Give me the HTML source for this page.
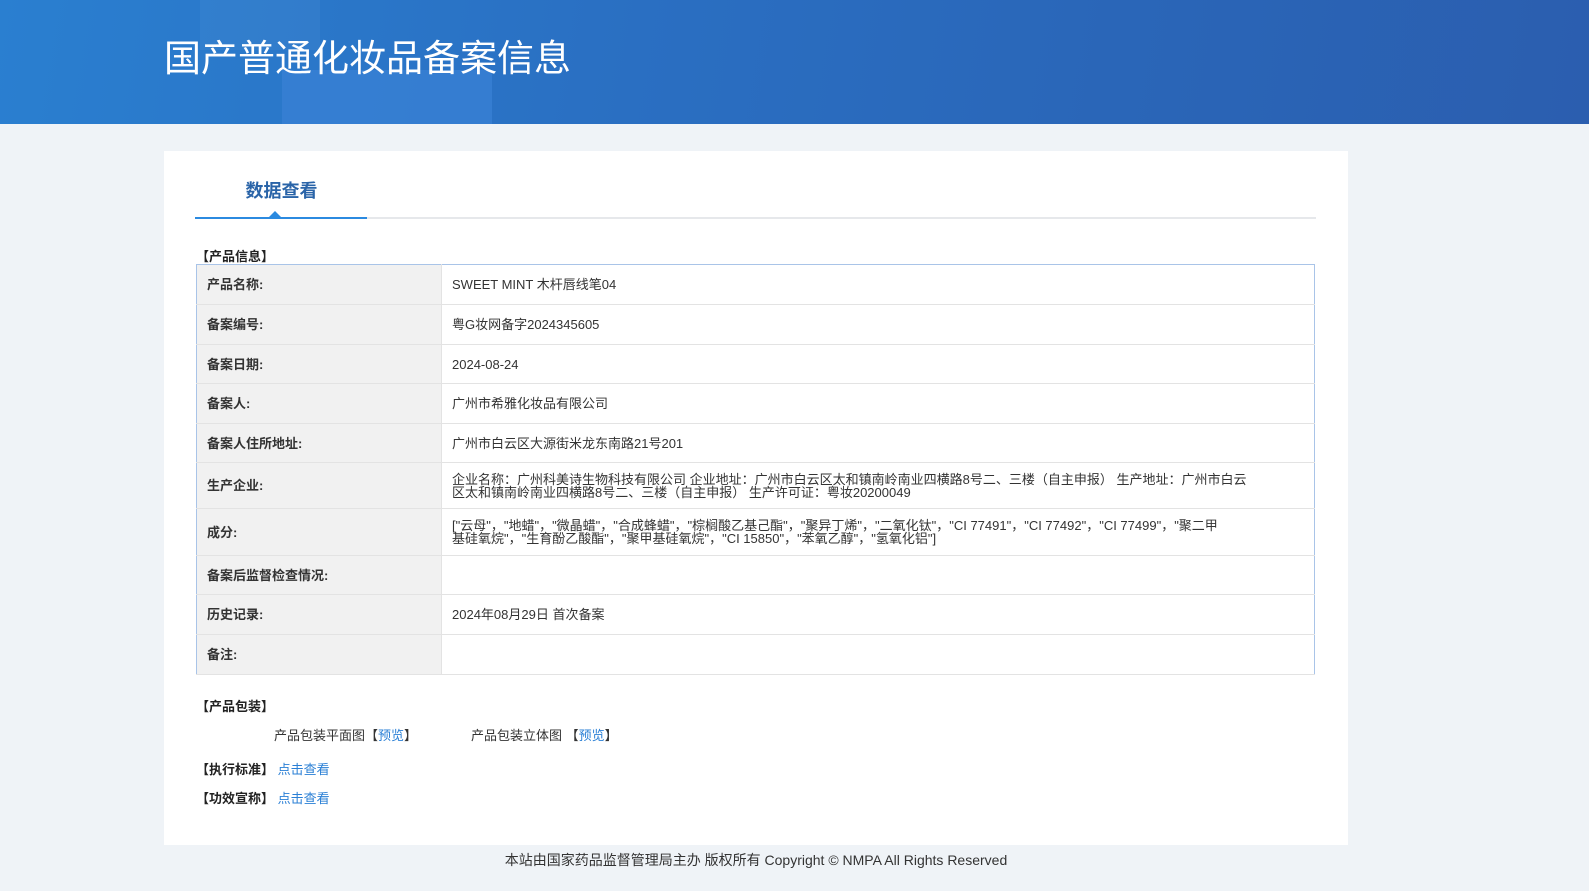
<!DOCTYPE html>
<html><head><meta charset="utf-8"><style>
*{margin:0;padding:0;box-sizing:border-box}
body{width:1589px;height:891px;background:#eff3f7;font-family:"Liberation Sans","Noto Sans CJK SC",sans-serif;font-size:13px;color:#333;position:relative;overflow:hidden}
.hd{position:absolute;left:0;top:0;width:1589px;height:124px;background:linear-gradient(100deg,#2a7fd0 0%,#2a6fc2 40%,#2a66b8 70%,#2b5eaf 100%);overflow:hidden}
.hd .s1{position:absolute;left:282px;top:70px;width:210px;height:60px;background:#3b82d6;opacity:.7}
.hd .s2{position:absolute;left:200px;top:-30px;width:120px;height:80px;background:rgba(255,255,255,.04)}
.hd h1{position:absolute;left:164px;top:28px;color:#fff;font-size:37px;font-weight:normal;letter-spacing:0}
.card{position:absolute;left:164px;top:151px;width:1184px;height:694px;background:#fff}
.tab{position:absolute;left:31px;top:26px;width:173px;text-align:center;font-size:18px;font-weight:bold;color:#2a64a8}
.line{position:absolute;left:31px;top:66px;width:1121px;height:2px;background:#e6e8eb}
.line b{position:absolute;left:0;top:0;width:172px;height:2px;background:#2b8ae0}
.tri{position:absolute;left:105px;top:60px;width:0;height:0;border-left:6px solid transparent;border-right:6px solid transparent;border-bottom:6px solid #2b8ae0}
.sec{position:absolute;left:32px;font-weight:bold;color:#222;font-size:13px}
table{position:absolute;left:32px;top:113px;width:1119px;border-collapse:collapse;border:1px solid #a9c4e8}
td{border-bottom:1px solid #e3e3e3;padding:0 10px;font-size:13px;line-height:13px}
td.l{width:245px;background:#f1f1f1;font-weight:bold;color:#333;border-right:1px solid #e3e3e3}
a{color:#2a7fd5;text-decoration:none}
.ft{position:absolute;top:850px;left:164px;width:1184px;text-align:center;font-size:14px;color:#333}
</style></head><body>
<div class="hd"><div class="s2"></div><div class="s1"></div><h1>国产普通化妆品备案信息</h1></div>
<div class="card">
<div class="tab">数据查看</div>
<div class="line"><b></b></div><div class="tri"></div>
<div class="sec" style="top:95px">【产品信息】</div>
<table>
<tr style="height:40px"><td class="l">产品名称:</td><td>SWEET MINT 木杆唇线笔04</td></tr>
<tr style="height:40px"><td class="l">备案编号:</td><td>粤G妆网备字2024345605</td></tr>
<tr style="height:39px"><td class="l">备案日期:</td><td>2024-08-24</td></tr>
<tr style="height:40px"><td class="l">备案人:</td><td>广州市希雅化妆品有限公司</td></tr>
<tr style="height:39px"><td class="l">备案人住所地址:</td><td>广州市白云区大源街米龙东南路21号201</td></tr>
<tr style="height:46px"><td class="l">生产企业:</td><td>企业名称：广州科美诗生物科技有限公司 企业地址：广州市白云区太和镇南岭南业四横路8号二、三楼（自主申报） 生产地址：广州市白云<br>区太和镇南岭南业四横路8号二、三楼（自主申报） 生产许可证：粤妆20200049</td></tr>
<tr style="height:47px"><td class="l">成分:</td><td>["云母"，"地蜡"，"微晶蜡"，"合成蜂蜡"，"棕榈酸乙基己酯"，"聚异丁烯"，"二氧化钛"，"CI 77491"，"CI 77492"，"CI 77499"，"聚二甲<br>基硅氧烷"，"生育酚乙酸酯"，"聚甲基硅氧烷"，"CI 15850"，"苯氧乙醇"，"氢氧化铝"]</td></tr>
<tr style="height:39px"><td class="l">备案后监督检查情况:</td><td></td></tr>
<tr style="height:40px"><td class="l">历史记录:</td><td>2024年08月29日 首次备案</td></tr>
<tr style="height:40px"><td class="l">备注:</td><td></td></tr>
</table>
<div class="sec" style="top:545px">【产品包装】</div>
<div style="position:absolute;left:110px;top:574px">产品包装平面图【<a>预览</a>】</div>
<div style="position:absolute;left:307px;top:574px">产品包装立体图 【<a>预览</a>】</div>
<div class="sec" style="top:608px">【执行标准】 <a style="font-weight:normal">点击查看</a></div>
<div class="sec" style="top:637px">【功效宣称】 <a style="font-weight:normal">点击查看</a></div>
</div>
<div class="ft">本站由国家药品监督管理局主办 版权所有 Copyright © NMPA All Rights Reserved</div>
</body></html>
